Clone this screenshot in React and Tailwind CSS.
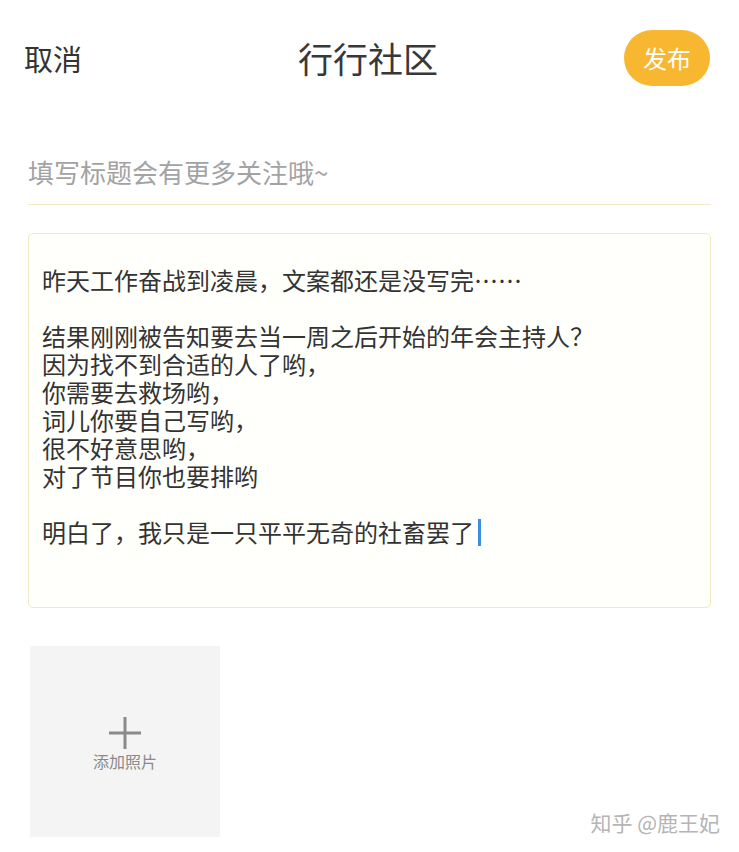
export default function App() {
  const font = { fontFamily: '"Noto Sans CJK SC", "Noto Sans", sans-serif' };
  return (
    <div className="relative w-[739px] h-[852px] bg-white overflow-hidden" style={font}>
      <div className="flex items-center justify-between pt-[30px] pl-[24px] pr-[29px]">
        <div className="w-[100px] text-[29px] leading-[56px] text-[#333]">取消</div>
        <div className="text-[35px] leading-[56px] text-[#383838] ml-[2px]">行行社区</div>
        <div className="w-[100px] flex justify-end">
          <div className="w-[86px] h-[56px] rounded-full bg-[#f8b731] flex items-center justify-center text-white text-[24px]">发布</div>
        </div>
      </div>

      <div className="mx-[28px] mt-[70px] pb-[16px] border-b border-[#f3ebc6]">
        <div className="text-[26px] leading-[32px] text-[#a3a3a3]">填写标题会有更多关注哦~</div>
      </div>

      <div className="mx-[28px] mt-[28px] h-[375px] border border-[#f2e9c4] rounded-[5px] bg-[#fffffb] pt-[32px] pl-[13px] text-[24px] leading-[28px] text-[#333]">
        <div>昨天工作奋战到凌晨，文案都还是没写完……</div>
        <div className="h-[28px]"></div>
        <div>结果刚刚被告知要去当一周之后开始的年会主持人？</div>
        <div>因为找不到合适的人了哟，</div>
        <div>你需要去救场哟，</div>
        <div>词儿你要自己写哟，</div>
        <div>很不好意思哟，</div>
        <div>对了节目你也要排哟</div>
        <div className="h-[28px]"></div>
        <div className="flex items-center">
          <span>明白了，我只是一只平平无奇的社畜罢了</span>
          <span className="inline-block w-[3px] h-[27px] bg-[#3b8fe0] ml-[4px]"></span>
        </div>
      </div>

      <div className="ml-[30px] mt-[38px] w-[190px] h-[191px] bg-[#f4f4f4] flex flex-col items-center justify-center">
        <svg width="36" height="36" viewBox="0 0 36 36" className="mt-[2px]">
          <path d="M18 2 V34 M2 18 H34" stroke="#8a8a8a" strokeWidth="3" />
        </svg>
        <div className="mt-0 text-[16px] leading-[20px] text-[#8a8a8a]">添加照片</div>
      </div>

      <div className="absolute right-[19px] bottom-[18px] text-[21px] leading-[24px] text-[#b5b5b5]">知乎 @鹿王妃</div>
    </div>
  );
}
